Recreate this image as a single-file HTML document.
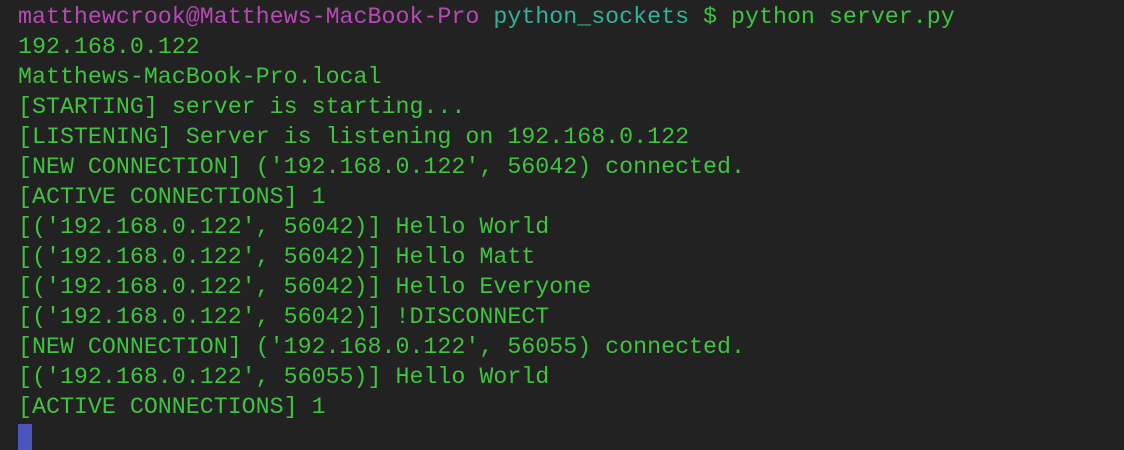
<!DOCTYPE html><html><head><style>
html,body{margin:0;padding:0;background:#222222;width:1124px;height:450px;overflow:hidden}
pre{margin:0;position:absolute;left:18px;top:2px;font-family:"Liberation Mono","DejaVu Sans Mono",monospace;font-size:23.3px;line-height:30px;color:#3ec43e}
.m{color:#b847b8}.t{color:#2fb39a}
.c{position:absolute;left:18px;top:424px;width:14px;height:26px;background:#4a55bd}
</style></head><body><pre><span class="m">matthewcrook@Matthews-MacBook-Pro</span> <span class="t">python_sockets</span> $ python server.py
192.168.0.122
Matthews-MacBook-Pro.local
[STARTING] server is starting...
[LISTENING] Server is listening on 192.168.0.122
[NEW CONNECTION] ('192.168.0.122', 56042) connected.
[ACTIVE CONNECTIONS] 1
[('192.168.0.122', 56042)] Hello World
[('192.168.0.122', 56042)] Hello Matt
[('192.168.0.122', 56042)] Hello Everyone
[('192.168.0.122', 56042)] !DISCONNECT
[NEW CONNECTION] ('192.168.0.122', 56055) connected.
[('192.168.0.122', 56055)] Hello World
[ACTIVE CONNECTIONS] 1</pre><div class="c"></div></body></html>
